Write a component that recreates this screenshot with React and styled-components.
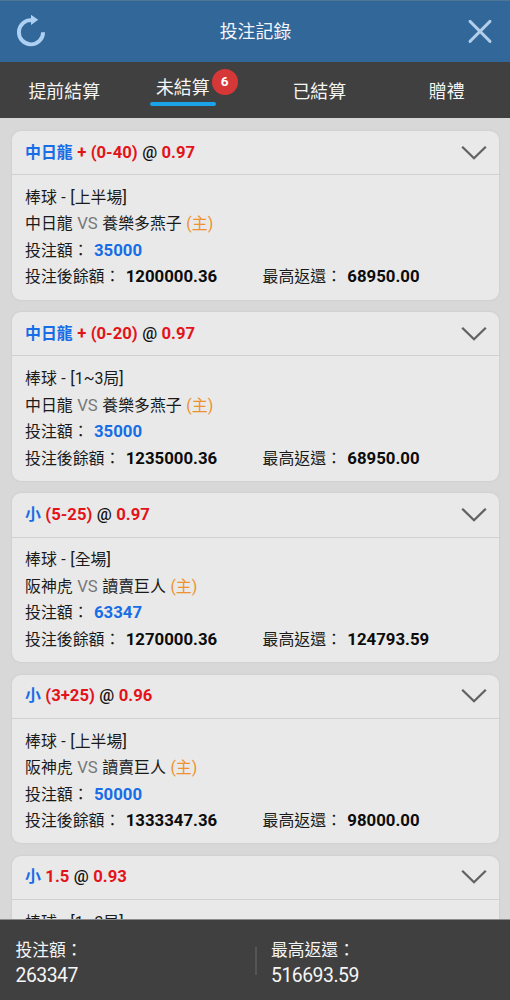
import React, { useState } from "react";
import styled, { createGlobalStyle } from "styled-components";

const GlobalStyle = createGlobalStyle`
    * {
        box-sizing: border-box;
    }

    body {
        margin: 0;
        background-color: #d8d8d8;
        font-family: Roboto, "Noto Sans CJK TC", sans-serif;
    }

    button {
        padding: 0;
        border: none;
        background: none;
        color: inherit;
        font: inherit;
        cursor: pointer;
    }
`;

const Page = styled.div`
    height: 100vh;
    display: flex;
    flex-direction: column;
    overflow: hidden;
    background-color: #d8d8d8;
`;

const Header = styled.header`
    flex: none;
    height: 62px;
    display: flex;
    align-items: center;
    justify-content: space-between;
    padding: 0 15px 0 16px;
    background-color: #326799;
    border-top: 1px solid #4d7696;
    color: #f2f6fa;
`;

const HeaderTitle = styled.h1`
    margin: 0;
    font-size: 17.9px;
    line-height: 26px;
    font-weight: 400;
`;

const IconButton = styled.button`
    width: 30px;
    height: 34px;
    display: flex;
    align-items: center;
    justify-content: center;
`;

const Tabs = styled.nav`
    flex: none;
    height: 56px;
    display: grid;
    grid-template-columns: repeat(4, 1fr);
    background-color: #404040;
`;

const Tab = styled.button`
    display: flex;
    align-items: center;
    justify-content: center;
    padding: 4px 0 0 1px;
    color: #f5f5f5;
    font-size: 17.9px;
    line-height: 26px;
`;

const TabLabel = styled.span`
    position: relative;
    padding: ${({ $active }) => ($active ? "0 6px 1px" : "0")};
    margin-left: ${({ $active }) => ($active ? "-18px" : "0")};
    margin-top: ${({ $active }) => ($active ? "-3px" : "0")};
    border-bottom: ${({ $active }) => ($active ? "4px solid transparent" : "none")};

    &::after {
        content: "";
        display: ${({ $active }) => ($active ? "block" : "none")};
        position: absolute;
        left: 0;
        right: 0;
        bottom: -4px;
        height: 4px;
        border-radius: 2px;
        background-color: #1aa3e8;
    }
`;

const Badge = styled.span`
    position: absolute;
    top: -6.5px;
    right: -22px;
    width: 26px;
    height: 26px;
    border-radius: 50%;
    background-color: #d63838;
    color: #ffffff;
    font-size: 13.5px;
    font-weight: 700;
    line-height: 25px;
    text-align: center;
`;

const List = styled.main`
    flex: 1;
    min-height: 0;
    overflow: hidden;
    padding: 13px 11px 0 12px;
    display: flex;
    flex-direction: column;
    gap: 12.5px;
`;

const Card = styled.section`
    flex: none;
    height: 168.7px;
    border-radius: 9px;
    background-color: #e9e9e9;
    box-shadow: 0 0 2px 1px rgba(0, 0, 0, 0.04);
`;

const CardHeader = styled.div`
    height: 44.3px;
    display: flex;
    align-items: center;
    justify-content: space-between;
    padding: 0 12px 0 13px;
    border-bottom: 1px solid #d0d0d0;
`;

const CardTitle = styled.h2`
    margin: 0;
    font-size: 16.7px;
    line-height: 26px;
    font-weight: 700;
    word-spacing: 0.3px;
    white-space: pre;
    color: #e3131a;
`;

const Pick = styled.span`
    color: #176de6;
    font-size: 15.9px;
`;

const At = styled.span`
    color: #111111;
    font-weight: 500;
`;

const CardBody = styled.div`
    padding: 9.7px 13px 0;
    color: #1a1a1a;
    font-size: 15.9px;
    line-height: 26.5px;
    word-spacing: 0.6px;
    white-space: pre;
`;

const Line = styled.div`
    height: 26.5px;
    display: ${({ $split }) => ($split ? "grid" : "block")};
    grid-template-columns: 237.5px 1fr;
`;

const Latin = styled.span`
    font-size: 16.7px;
    line-height: 1;
`;

const Versus = styled(Latin)`
    color: #777777;
`;

const Host = styled.span`
    color: #ed922c;
`;

const Amount = styled.strong`
    margin-left: 0.8px;
    color: ${({ $blue }) => ($blue ? "#176de6" : "#0c0c0c")};
    font-size: 16.8px;
    font-weight: 700;
    line-height: 1;
`;

const Footer = styled.footer`
    flex: none;
    height: 81px;
    display: grid;
    grid-template-columns: 1fr 1fr;
    align-items: center;
    background-color: #404040;
    border-top: 1px solid #8c8c8c;
    color: #f5f5f5;
`;

const Total = styled.div`
    padding: 4px 0 0 15.5px;
    font-size: 16.8px;
    line-height: 26px;
`;

const TotalValue = styled.div`
    font-size: 19.4px;
    letter-spacing: -0.5px;
    line-height: 25px;
`;

const TotalRight = styled(Total)`
    position: relative;
    padding-left: 16px;

    &::before {
        content: "";
        position: absolute;
        left: 0;
        top: 14px;
        width: 2px;
        height: 28px;
        background-color: #555555;
    }
`;

const TABS = ["提前結算", "未結算", "已結算", "贈禮"];

const BETS = [
  { pick: "中日龍", line: "+ (0-40)", odds: "0.97", period: "上半場", away: "中日龍", home: "養樂多燕子", stake: "35000", balance: "1200000.36", payout: "68950.00" },
  { pick: "中日龍", line: "+ (0-20)", odds: "0.97", period: "1~3局", away: "中日龍", home: "養樂多燕子", stake: "35000", balance: "1235000.36", payout: "68950.00" },
  { pick: "小", line: "(5-25)", odds: "0.97", period: "全場", away: "阪神虎", home: "讀賣巨人", stake: "63347", balance: "1270000.36", payout: "124793.59" },
  { pick: "小", line: "(3+25)", odds: "0.96", period: "上半場", away: "阪神虎", home: "讀賣巨人", stake: "50000", balance: "1333347.36", payout: "98000.00" },
  { pick: "小", line: "1.5", odds: "0.93", period: "1~3局" },
];

const RefreshIcon = () => (
  <svg width="30" height="34" viewBox="0 0 30 34" fill="none">
    <path d="M16 5.2A12.1 12.1 0 1 0 27.1 17.3" stroke="#aed0f2" strokeWidth="3.9" />
    <path d="M15 -0.2L22.2 4.8L15 10Z" fill="#aed0f2" />
  </svg>
);

const CloseIcon = () => (
  <svg width="26" height="26" viewBox="0 0 26 26" fill="none">
    <path d="M3 2.4L23 22.4M23 2.4L3 22.4" stroke="#b3cee9" strokeWidth="2.9" strokeLinecap="round" />
  </svg>
);

const ChevronIcon = () => (
  <svg width="26" height="16" viewBox="0 0 26 16" fill="none">
    <path d="M1.2 1.7L13 13.2L24.8 1.7" stroke="#626262" strokeWidth="2.3" />
  </svg>
);

const BetCard = ({ bet }) => (
  <Card>
    <CardHeader>
      <CardTitle>
        <Pick>{bet.pick}</Pick> {bet.line} <At>@</At> {bet.odds}
      </CardTitle>
      <ChevronIcon />
    </CardHeader>
    <CardBody>
      <Line>
        棒球 - <Latin>[</Latin>
        {bet.period}
        <Latin>]</Latin>
      </Line>
      {bet.home && (
        <>
          <Line>
            {bet.away} <Versus>VS</Versus> {bet.home} <Host>(主)</Host>
          </Line>
          <Line>
            投注額： <Amount $blue>{bet.stake}</Amount>
          </Line>
          <Line $split>
            <span>
              投注後餘額： <Amount>{bet.balance}</Amount>
            </span>
            <span>
              最高返還： <Amount>{bet.payout}</Amount>
            </span>
          </Line>
        </>
      )}
    </CardBody>
  </Card>
);

const App = () => {
  const [active, setActive] = useState("未結算");

  return (
    <Page lang="zh-Hant">
      <GlobalStyle />
      <Header>
        <IconButton aria-label="重新整理">
          <RefreshIcon />
        </IconButton>
        <HeaderTitle>投注記錄</HeaderTitle>
        <IconButton aria-label="關閉">
          <CloseIcon />
        </IconButton>
      </Header>
      <Tabs>
        {TABS.map((tab) => (
          <Tab key={tab} onClick={() => setActive(tab)}>
            <TabLabel $active={tab === active}>
              {tab}
              {tab === "未結算" && <Badge>6</Badge>}
            </TabLabel>
          </Tab>
        ))}
      </Tabs>
      <List>
        {BETS.map((bet, index) => (
          <BetCard key={index} bet={bet} />
        ))}
      </List>
      <Footer>
        <Total>
          投注額：
          <TotalValue>263347</TotalValue>
        </Total>
        <TotalRight>
          最高返還：
          <TotalValue>516693.59</TotalValue>
        </TotalRight>
      </Footer>
    </Page>
  );
};

export default App;
